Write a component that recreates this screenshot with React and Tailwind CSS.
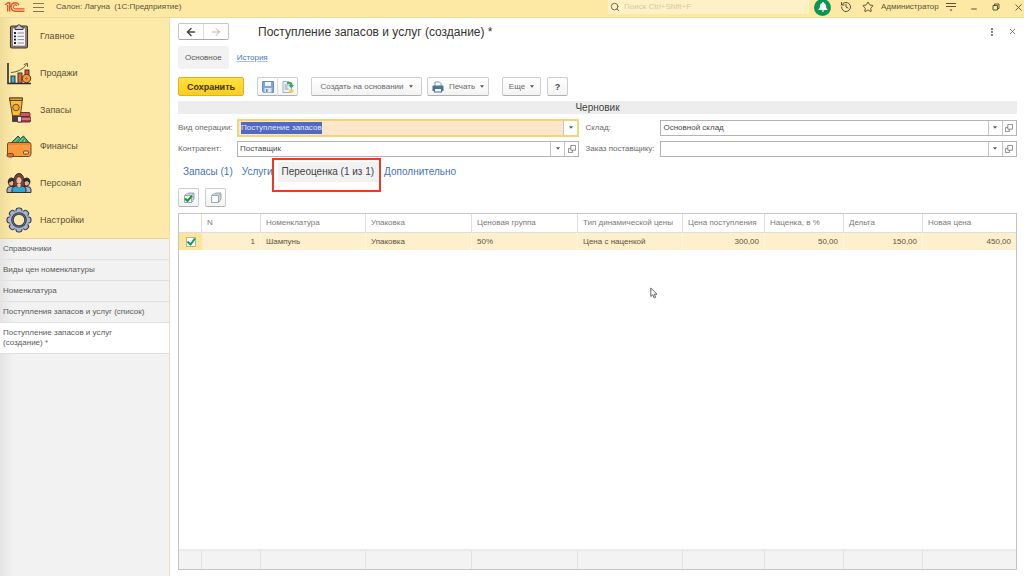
import React, { useEffect, useRef, useState } from 'react';
import { Search, History, Star, Minus, X, ArrowLeft, ArrowRight, EllipsisVertical } from 'lucide-react';

const ClipboardIcon = () => (
  <svg viewBox="0 0 26 26" className="w-[26px] h-[26px]" strokeLinejoin="round">
    <rect x="4.500" y="3" width="17" height="22" rx="1.5" fill="#a08478" stroke="#3a3434" strokeWidth="1.1" />
    <rect x="6.500" y="5" width="13" height="18" fill="#f4f6fa" stroke="#555b68" strokeWidth=".6" />
    <path d="M9 6.5V3.8h2a2 2 0 0 1 4 0h2v2.7z" fill="#c3c9d6" stroke="#3a3840" />
    <path d="M11.500 10h6.500M11.500 13.300h6.500M11.500 16.600h6.500M11.500 20h6.500" stroke="#7b808c" strokeWidth=".9" />
    <path d="M8 10h2M8 13.3h2M8 16.6h2M8 20h2" stroke="#23232b" strokeWidth="1.8" />
  </svg>
);

const SalesIcon = () => (
  <svg viewBox="0 0 26 26" className="w-[26px] h-[26px]" stroke="#2e2c2c" strokeWidth=".9">
    <path d="M2 3v20.500h23" fill="none" strokeWidth="1.600" />
    <rect x="5" y="16" width="4" height="7" fill="#2fb4d8" />
    <rect x="12" y="13" width="4" height="10" fill="#e0673f" />
    <rect x="19" y="10" width="4" height="8" fill="#e9503a" />
    <circle cx="20.500" cy="18.500" r="4.200" fill="#f79a32" />
    <path d="M18.800 18.500h3.400M20.500 16.800v3.400" stroke="#c2641d" />
    <path d="M5 12.500C12 12 17 9 20.500 4.500M17.800 4.600l3.600-1.300.2 3.600" fill="none" stroke="#4c4630" />
  </svg>
);

const StockIcon = () => (
  <svg viewBox="0 0 26 26" className="w-[26px] h-[26px]" stroke="#4a3328" strokeWidth=".9" strokeLinejoin="round">
    <path d="M3.500 1h13l-2 18h-8z" fill="#fbbe2e" />
    <path d="M3.500 1h13l-.3 2.500H3.800z" fill="#eea32b" />
    <circle cx="10" cy="10.500" r="3.300" fill="#f5a926" stroke="#5b4224" />
    <rect x="6.500" y="19" width="6" height="5.500" fill="#4d3b3e" />
    <rect x="14" y="15.500" width="10" height="4" rx="1" fill="#c95863" />
    <rect x="11.500" y="19.500" width="13" height="5.500" rx="1" fill="#b5364a" />
    <path d="M11.500 19.500h4V25h-4z" fill="#f0e8ee" />
    <path d="M15.500 22h9" stroke="#f0c8cc" />
  </svg>
);

const FinanceIcon = () => (
  <svg viewBox="0 0 26 26" className="w-[26px] h-[26px]" stroke="#5e3c22" strokeWidth=".9" strokeLinejoin="round">
    <path d="M5 10l7-7 2.500 2.500L17.500 3l6 7z" fill="#3d9b74" stroke="#1d4a3c" />
    <path d="M8.500 9l4-4M13.500 9l4-4M18 9l1-2.500" stroke="#b6dcae" />
    <path d="M1.500 11q0-1.500 2-1.500H23q2 0 2 2V21q0 2.500-2.500 2.500H4Q1.500 23.500 1.500 21z" fill="#fb9a3c" />
    <path d="M2 11h22" stroke="#d9762a" />
    <rect x="17.500" y="18" width="5" height="3" rx="1" fill="#f6d49c" />
    <rect x="1" y="20.500" width="6.500" height="3.500" rx="1.700" fill="#e8702d" />
  </svg>
);

const StaffIcon = () => (
  <svg viewBox="0 0 26 26" className="w-[26px] h-[26px]" stroke="#2b2024" strokeWidth=".9" strokeLinejoin="round">
    <path d="M1 22.500v-3q0-3 4-3h3v6zM25 22.500v-3q0-3-4-3h-3v6z" fill="#9fb0c8" />
    <circle cx="5.500" cy="13" r="3" fill="#e8b48f" />
    <path d="M2.200 12.500q0-4.500 3.500-4.500t3.500 4l-3-1.500z" fill="#3d2b2e" />
    <circle cx="20.500" cy="13" r="3" fill="#e8b48f" />
    <path d="M17 12q0-4 3.500-4t3.500 4.500l-3-2z" fill="#3d2b2e" />
    <path d="M7.500 16.500C8 12 7.500 3.500 13 3.500S18 12 18.500 16.500z" fill="#74453c" />
    <ellipse cx="13" cy="10.500" rx="2.900" ry="3.800" fill="#f1c19c" strokeWidth=".6" />
    <path d="M6 22.500v-3q0-3 4.500-3.500l2.500 2 2.500-2q4.500.5 4.500 3.500v3z" fill="#2ea7d8" />
    <path d="M11.300 14h3.400v2.500L13 18l-1.700-1.500z" fill="#f1c19c" stroke="none" />
  </svg>
);

const GearIcon = () => (
  <svg viewBox="0 0 26 26" className="w-[26px] h-[26px]" stroke="#3b4150" strokeWidth="1.100">
    {[0, 45, 90, 135, 180, 225, 270, 315].map((angle) => (
      <rect key={angle} x="10" y="1" width="6" height="7" rx="2.500" fill="#a3b5d6" transform={`rotate(${angle} 13 13)`} />
    ))}
    <circle cx="13" cy="13" r="9.600" fill="#a3b5d6" stroke="none" />
    <circle cx="13" cy="13" r="7.300" fill="#7d8798" />
    <circle cx="13" cy="13" r="5.800" fill="#feeaa8" />
  </svg>
);

const LogoIcon = () => (
  <svg viewBox="0 0 20 12" className="w-5 h-3" fill="none" stroke="#d9562f" strokeWidth="1.400">
    <path d="M.3 4L3 1.800h1.700V10.500M2.700 4v6.500" />
    <path d="M14 4.200A4.200 4.200 0 1 0 10.300 10.200H19.500" />
    <path d="M12 5A2 2 0 1 0 10.300 7.900H19.500" strokeWidth="1.100" />
  </svg>
);

const SaveIcon = () => (
  <svg viewBox="0 0 12 12" className="w-3 h-3">
    <path d="M.5.5h11v11h-10l-1-1z" fill="#7fa8d0" stroke="#6690bb" />
    <rect x="3" y="1" width="6" height="4" fill="#eef4fa" />
    <rect x="2.500" y="7" width="7" height="4.500" fill="#dfe9f3" />
    <rect x="4" y="8" width="1.500" height="3" fill="#5d87b3" />
  </svg>
);

const PostIcon = () => (
  <svg viewBox="0 0 12 12" className="w-3 h-3">
    <path d="M1 .5h6l2.500 2.500v8.500H1z" fill="#eef1f5" stroke="#a5b3c2" />
    <path d="M2.500 4h4M2.500 6h3M2.500 8h4" stroke="#8ea0b4" />
    <path d="M5 1h3q2.500 0 2.500 3h1.500L9.300 7.500 6.500 4h1.600Q8 3 7 3H5z" fill="#2fae67" />
    <rect x="7" y="8.500" width="4.500" height="3" fill="#f0cf5c" />
  </svg>
);

const PrinterIcon = () => (
  <svg viewBox="0 0 12 12" className="w-3 h-3">
    <path d="M3 5V1h4.500L9 2.500V5" fill="#fff" stroke="#7d9ab2" />
    <path d="M1.500 4.500h9q1 0 1 1V10H.5V5.500q0-1 1-1z" fill="#4d7595" />
    <rect x="2.500" y="7.500" width="7" height="3.500" fill="#f4f7fa" stroke="#4d7595" />
  </svg>
);

const LayersIcon = ({ checked }) => (
  <svg viewBox="0 0 12 12" className="w-3 h-3" fill="#fff" stroke="#9aa8b4">
    <path d="M4 2.500L5.500 1H11v6L9.500 8.500" fill="#dfe5ea" />
    <path d="M1.500 3.500h7v7h-7zM1.500 3.500l1.500-1.500h7v7l-1.500 1.500" />
    {checked && <path d="M2 6.500l2.500 2.500L9 3.800" fill="none" stroke="#1f9a3d" strokeWidth="2.200" />}
  </svg>
);

const OpenIcon = () => (
  <svg viewBox="0 0 10 10" className="w-2 h-2" fill="#fff" stroke="#707070">
    <path d="M.5 4.500h5v5h-5z" />
    <path d="M3.500 .5h6v6h-6z" />
  </svg>
);

const Caret = () => (
  <svg viewBox="0 0 6 4" className="w-1 h-[3px]" fill="#555">
    <path d="M0 0h6L3 4z" />
  </svg>
);

const menuItems = [
  { label: 'Главное', icon: ClipboardIcon },
  { label: 'Продажи', icon: SalesIcon },
  { label: 'Запасы', icon: StockIcon },
  { label: 'Финансы', icon: FinanceIcon },
  { label: 'Персонал', icon: StaffIcon },
  { label: 'Настройки', icon: GearIcon },
];

const openWindows = [
  'Справочники',
  'Виды цен номенклатуры',
  'Номенклатура',
  'Поступления запасов и услуг (список)',
  'Поступление запасов и услуг (создание) *',
];

const columns = [
  { label: '', width: 'w-[23px]' },
  { label: 'N', width: 'w-[59px]' },
  { label: 'Номенклатура', width: 'w-[105px]' },
  { label: 'Упаковка', width: 'w-[106px]' },
  { label: 'Ценовая группа', width: 'w-[106px]' },
  { label: 'Тип динамической цены', width: 'w-[105px]' },
  { label: 'Цена поступления', width: 'w-[82px]' },
  { label: 'Наценка, в %', width: 'w-[79px]' },
  { label: 'Дельта', width: 'w-[79px]' },
  { label: 'Новая цена', width: '' },
];

const row = [
  { value: '1', numeric: true },
  { value: 'Шампунь' },
  { value: 'Упаковка' },
  { value: '50%' },
  { value: 'Цена с наценкой' },
  { value: '300,00', numeric: true },
  { value: '50,00', numeric: true },
  { value: '150,00', numeric: true },
  { value: '450,00', numeric: true },
];

const buttonStyle = 'h-[19px] flex items-center justify-center rounded-xs border border-[#cdcdcd] border-b-[#b0b0b0] bg-linear-to-b from-white to-[#f3f3f3]';

const Field = ({ id, label, labelWidth, value, active, openable = true }) => {
  const inputRef = useRef(null);

  // The active field starts with its whole value selected
  useEffect(() => {
    if (active) {
      inputRef.current.focus();
      inputRef.current.select();
    }
  }, [active]);

  return (
    <div className="flex items-center h-[21px]">
      <label htmlFor={id} className={`${labelWidth} shrink-0 text-[#6a6a6a] whitespace-nowrap`}>{label}</label>
      <div className={`flex-1 min-w-0 flex ${active ? 'h-[18px] border-2 border-[#f2d675] bg-[#fee6cb]' : 'h-4 border border-[#b4b4b4] bg-white'}`}>
        <input id={id} ref={inputRef} defaultValue={value} className="flex-1 min-w-0 px-0.5 bg-transparent outline-none text-[#4a4a4a] selection:bg-[#5069c4] selection:text-[#e4e9fa]" />
        <button aria-label="Выбрать" className="w-[14px] border-l border-[#c4c4c4] bg-white flex items-center justify-center"><Caret /></button>
        {openable && <button aria-label="Открыть" className="w-[14px] border-l border-[#c4c4c4] bg-white flex items-center justify-center"><OpenIcon /></button>}
      </div>
    </div>
  );
};

const TopBar = () => (
  <header className="h-[18px] pb-[3px] flex items-center bg-[#fee9a4] border-b border-[#eddca2] text-[#5c5236]">
    <div className="flex items-center pl-[5px]">
      <LogoIcon />
      <button aria-label="Меню" className="ml-2 w-[11px] h-[9px] flex flex-col justify-between">
        <span className="w-full h-px bg-[#85784c]" />
        <span className="w-full h-px bg-[#85784c]" />
        <span className="w-full h-px bg-[#85784c]" />
      </button>
      <span className="ml-3 whitespace-pre">Салон: Лагуна  (1С:Предприятие)</span>
    </div>
    <div className="ml-auto flex items-center">
      <label className="w-[201px] h-[14px] flex items-center gap-1 px-0.5 bg-[#fff1c6]">
        <Search size={10} strokeWidth={2} />
        <input aria-label="Поиск" placeholder="Поиск Ctrl+Shift+F" className="flex-1 min-w-0 bg-transparent outline-none placeholder:text-[#d3c9a8]" />
      </label>
      <button aria-label="Уведомления" className="ml-[5px] w-[17px] h-[17px] rounded-full bg-[#0c9455] flex items-center justify-center">
        <svg viewBox="0 0 10 10" className="w-[10px] h-[10px]" fill="#fff">
          <path d="M5 0a1 1 0 0 1 1 .9Q8 1.500 8 4t1.500 3.500v.5h-9v-.5Q2 6.500 2 4T4 .9A1 1 0 0 1 5 0zM3.800 8.600h2.400a1.200 1.200 0 0 1-2.400 0z" />
        </svg>
      </button>
      <button aria-label="История" className="ml-[9px]"><History size={12} strokeWidth={2} /></button>
      <button aria-label="Избранное" className="ml-[10px]"><Star size={12} strokeWidth={2} /></button>
      <a href="#user" className="ml-[7px] w-[57px]">Администратор</a>
      <button aria-label="Настройка" className="ml-2">
        <svg viewBox="0 0 10 10" className="w-[10px] h-[10px]" stroke="#5c5236">
          <path d="M0 1.500h10M0 4.500h10" />
          <path d="M3.500 7.500h3L5 9.300z" fill="#5c5236" stroke="none" />
        </svg>
      </button>
      <button aria-label="Свернуть" className="ml-[14px] pt-1"><Minus size={8} strokeWidth={3} /></button>
      <button aria-label="Развернуть" className="ml-[14px]">
        <svg viewBox="0 0 8 8" className="w-2 h-2" fill="none" stroke="#5c5236">
          <path d="M1 2.500h4.500V7H1zM2.500 2.500V1H7v4.500H5.500" />
        </svg>
      </button>
      <button aria-label="Закрыть" className="ml-[13px]"><X size={11} strokeWidth={2} /></button>
    </div>
  </header>
);

const Sidebar = () => (
  <aside className="w-[170px] shrink-0 flex flex-col border-r border-[#e9dfbd] bg-linear-to-r from-[#e4e4e4] to-[#f2f2f2] to-8%">
    <nav className="h-[221px] grid grid-rows-6 border-b border-[#e8d48f] bg-linear-to-r from-[#f0dc9a] to-[#feeaa8] to-8% text-[9px]">
      {menuItems.map((item) => {
        const Icon = item.icon;
        return (
          <a key={item.label} href="#section" className="flex items-center gap-2 pl-1.5 text-[#5a5036]">
            <Icon />
            <span>{item.label}</span>
          </a>
        );
      })}
    </nav>
    {openWindows.map((title, index) => (
      <a
        key={title}
        href="#window"
        className={`min-h-[21px] pl-[3px] pr-12 flex items-center border-b border-[#e0e0e0] text-[#5a5a5a] leading-[10px] ${index === openWindows.length - 1 ? 'bg-white h-[31px]' : 'whitespace-nowrap'}`}
      >
        {title}
      </a>
    ))}
  </aside>
);

const PriceTable = () => {
  const [checked, setChecked] = useState(true);

  return (
    <div className="relative mt-[6px] flex-1 flex flex-col border border-[#c4c4c4]">
      <table className="w-full table-fixed border-separate border-spacing-0">
        <thead>
          <tr className="h-[19px] text-[#7a7a7a]">
            {columns.map((column, index) => (
              <th key={index} className={`${column.width} p-0 pl-[5px] text-left font-normal whitespace-nowrap border-r border-b border-[#dedede] last:border-r-0`}>
                {column.label}
              </th>
            ))}
          </tr>
        </thead>
        <tbody>
          <tr className="h-[17px] bg-[#fff0cd] text-[#5b5239]">
            <td className="p-0 bg-[#fde59b]">
              <label className="relative mx-auto block w-[10px] h-[10px] bg-white border border-[#b9b193]">
                <input type="checkbox" aria-label="Выбрать строку" checked={checked} onChange={() => setChecked(!checked)} className="block w-full h-full appearance-none" />
                {checked && (
                  <svg viewBox="0 0 10 10" className="absolute -top-px -left-px w-[10px] h-[10px] pointer-events-none" fill="none" stroke="#0e9a63" strokeWidth="2">
                    <path d="M1.500 4.500L4.500 7.500L9 1.500" />
                  </svg>
                )}
              </label>
            </td>
            {row.map((cell, index) => (
              <td key={index} className={`py-0 px-[5px] whitespace-nowrap border-r border-[#fdf6e2] last:border-r-0 ${cell.numeric ? 'text-right' : ''}`}>
                {cell.value}
              </td>
            ))}
          </tr>
        </tbody>
      </table>
      <div className="flex-1" />
      <div className="h-5 flex border-t-2 border-[#ebebeb] bg-[#f3f3f3]">
        {columns.map((column, index) => (
          <span key={index} className={column.width ? `${column.width} border-r border-[#e2e2e2]` : 'flex-1'} />
        ))}
      </div>

      {/* Mouse pointer over the free area */}
      <svg viewBox="0 0 8 12" className="absolute left-[471px] top-[73px] w-2 h-3" fill="#fff" stroke="#555" strokeWidth=".9">
        <path d="M.8 1v8.500l2-1.800 1.400 3.300 1.500-.7L4.300 7.200H7z" />
      </svg>
    </div>
  );
};

const App = () => {
  return (
    <div className="min-h-screen flex flex-col bg-white text-[8px] leading-3" style={{ fontFamily: '"Liberation Sans", Arial, sans-serif' }}>
      <TopBar />
      <div className="flex-1 flex">
        <Sidebar />

        <main className="flex-1 min-w-0 flex flex-col pl-2 pr-[7px] pt-[5px] pb-1.5">
          <div className="h-[17px] flex items-center">
            <div className="flex h-[17px] rounded-xs border border-[#c6c6c6] border-b-[#a8a8a8]">
              <button aria-label="Назад" className="w-[25px] flex items-center justify-center border-r border-[#dcdcdc] text-[#444]"><ArrowLeft size={12} strokeWidth={3} /></button>
              <button aria-label="Вперед" className="w-[24px] flex items-center justify-center text-[#b0b0b0]"><ArrowRight size={12} strokeWidth={2} /></button>
            </div>
            <h1 className="ml-[29px] text-[12px] text-[#333]">Поступление запасов и услуг (создание) *</h1>
            <button aria-label="Еще" className="ml-auto text-[#555]"><EllipsisVertical size={10} strokeWidth={3} /></button>
            <button aria-label="Закрыть форму" className="ml-[11px] text-[#555]"><X size={9} strokeWidth={2} /></button>
          </div>

          <div className="mt-[6px] h-[23px] flex items-center">
            <a href="#main" className="h-[23px] px-[7px] flex items-center rounded-xs bg-[#f2f2f2] text-[#5a5a5a]">Основное</a>
            <a href="#history" className="ml-2 text-[#4a78b8] underline decoration-[#a9c0de]">История</a>
          </div>

          <div className="mt-2 flex items-center">
            <button className="w-[66px] h-[19px] rounded-xs border border-[#d8b32a] bg-linear-to-b from-[#ffe13c] to-[#fbcd1e] text-[9px] font-bold text-[#3d3410]">Сохранить</button>
            <button aria-label="Записать" className={`${buttonStyle} ml-[13px] w-[21px] rounded-r-none border-r-[#dcdcdc]`}><SaveIcon /></button>
            <button aria-label="Провести" className={`${buttonStyle} w-5 rounded-l-none border-l-0`}><PostIcon /></button>
            <button className={`${buttonStyle} ml-[13px] w-[111px] gap-[5px] text-[#6a6a6a]`}>Создать на основании <Caret /></button>
            <button className={`${buttonStyle} ml-[5px] w-[62px] gap-[5px] text-[#6a6a6a]`}><PrinterIcon /> Печать <Caret /></button>
            <button className={`${buttonStyle} ml-[13px] w-[39px] gap-[5px] text-[#6a6a6a]`}>Еще <Caret /></button>
            <button className={`${buttonStyle} ml-[6px] w-[21px] text-[9px] font-bold text-[#444]`}>?</button>
          </div>

          <div className="mt-[5px] h-[13px] flex items-center justify-center bg-[#ededed] text-[10px] text-[#444]">Черновик</div>

          <div className="mt-[3px] grid grid-cols-[401fr_431fr] gap-x-[6px]">
            <Field id="operation" label="Вид операции:" labelWidth="w-[59px]" value="Поступление запасов" active openable={false} />
            <Field id="warehouse" label="Склад:" labelWidth="w-[75px]" value="Основной склад" />
            <Field id="partner" label="Контрагент:" labelWidth="w-[59px]" value="Поставщик" />
            <Field id="order" label="Заказ поставщику:" labelWidth="w-[75px]" value="" />
          </div>

          <div className="mt-[3px] pl-[5px] h-5 flex items-center text-[10px] text-[#3f73bb]">
            <a href="#stock">Запасы (1)</a>
            <a href="#services" className="ml-[9px]">Услуги</a>
            <a href="#revaluation" className="relative ml-[5px] h-5 px-1 flex items-center bg-[#f2f2f2] text-[#444]">
              Переоценка (1 из 1)
              <span className="absolute -left-[6px] -right-[3px] -top-1 h-[34px] border-2 border-[#ee3a22]" />
            </a>
            <a href="#extra" className="ml-[6px]">Дополнительно</a>
          </div>

          <div className="mt-[6px] flex gap-[6px]">
            <button aria-label="Отметить все" className={`${buttonStyle} w-[21px]`}><LayersIcon checked /></button>
            <button aria-label="Снять отметки" className={`${buttonStyle} w-[21px]`}><LayersIcon /></button>
          </div>

          <PriceTable />
        </main>
      </div>
    </div>
  );
};

export default App;
